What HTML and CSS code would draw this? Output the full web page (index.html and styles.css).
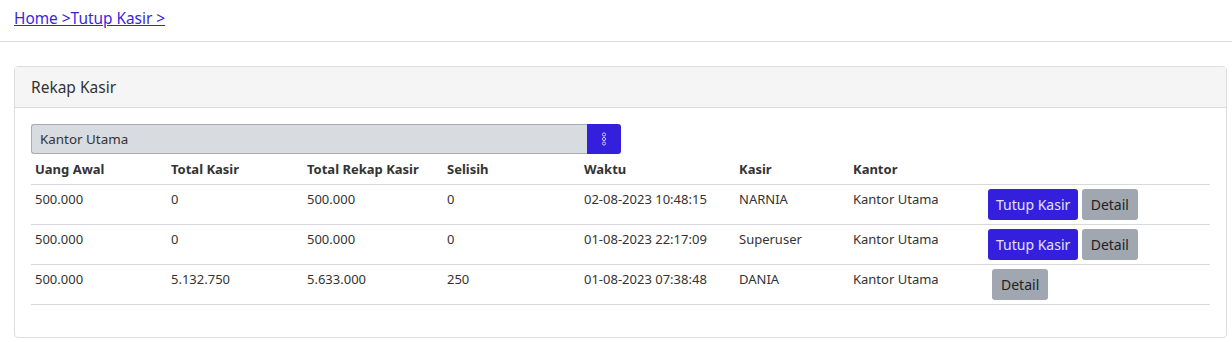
FILE: index.html
```html
<!DOCTYPE html>
<html lang="id">
  <head>
    <meta charset="UTF-8" />
    <title>Tutup Kasir</title>
    <link rel="stylesheet" href="styles.css">
  </head>
  <body>
    <nav class="breadcrumb">
      <a href="#">Home &gt;Tutup Kasir &gt;</a>
    </nav>
    <div class="page">
      <section class="card">
        <div class="card-header">Rekap Kasir</div>
        <div class="card-body">
          <div class="select-group">
            <div class="select">Kantor Utama</div>
            <button class="select-button">
              <svg width="8" height="16" viewBox="0 0 8 16">
                <circle cx="4" cy="3.5" r="1.6" fill="none" stroke="#c9c4ff" stroke-width="1"/>
                <circle cx="4" cy="8" r="1.6" fill="none" stroke="#c9c4ff" stroke-width="1"/>
                <circle cx="4" cy="12.5" r="1.6" fill="none" stroke="#c9c4ff" stroke-width="1"/>
              </svg>
            </button>
          </div>
          <table class="rekap-table">
            <thead>
              <tr>
                <th class="col-awal">Uang Awal</th>
                <th class="col-total">Total Kasir</th>
                <th class="col-rekap">Total Rekap Kasir</th>
                <th class="col-selisih">Selisih</th>
                <th class="col-waktu">Waktu</th>
                <th class="col-kasir">Kasir</th>
                <th class="col-kantor">Kantor</th>
                <th></th>
              </tr>
            </thead>
            <tbody>
              <tr>
                <td>500.000</td>
                <td>0</td>
                <td>500.000</td>
                <td>0</td>
                <td>02-08-2023 10:48:15</td>
                <td>NARNIA</td>
                <td>Kantor Utama</td>
                <td class="actions">
                  <button class="btn btn-primary">Tutup Kasir</button>
                  <button class="btn btn-secondary">Detail</button>
                </td>
              </tr>
              <tr>
                <td>500.000</td>
                <td>0</td>
                <td>500.000</td>
                <td>0</td>
                <td>01-08-2023 22:17:09</td>
                <td>Superuser</td>
                <td>Kantor Utama</td>
                <td class="actions">
                  <button class="btn btn-primary">Tutup Kasir</button>
                  <button class="btn btn-secondary">Detail</button>
                </td>
              </tr>
              <tr>
                <td>500.000</td>
                <td>5.132.750</td>
                <td>5.633.000</td>
                <td>250</td>
                <td>01-08-2023 07:38:48</td>
                <td>DANIA</td>
                <td>Kantor Utama</td>
                <td class="actions">
                  <button class="btn btn-secondary single">Detail</button>
                </td>
              </tr>
            </tbody>
          </table>
        </div>
      </section>
    </div>
  </body>
</html>
```

FILE: styles.css
```css
* {
  margin: 0;
  padding: 0;
  box-sizing: border-box;
}
body {
  font-family: "Noto Sans", "Open Sans", sans-serif;
  font-size: 13px;
  color: #333;
  background: white;
}
.breadcrumb {
  padding: 8px 14px 0;
  height: 42px;
  border-bottom: 1px solid #dcdcdc;
  font-size: 15.4px;
}
.breadcrumb a {
  color: #3a1fe0;
  text-decoration: underline;
}
.page {
  padding: 24px 5px 0 14px;
}
.card {
  border: 1px solid #ddd;
  border-radius: 4px;
}
.card-header {
  height: 41px;
  padding: 0 16px;
  display: flex;
  align-items: center;
  background-color: #f5f5f5;
  border-bottom: 1px solid #ddd;
  font-size: 15.5px;
  color: #333;
}
.card-body {
  padding: 16px 16px 32px;
}
.select-group {
  display: flex;
  width: 590px;
  height: 30px;
}
.select {
  flex: 1;
  display: flex;
  align-items: center;
  padding: 0 8px;
  background-color: #d8dbe0;
  border: 1px solid #a9adb3;
  border-right: none;
  border-radius: 3px 0 0 3px;
  font-size: 13.4px;
  color: #333;
}
.select-button {
  width: 34px;
  border: none;
  border-radius: 0 3px 3px 0;
  background-color: #3420dc;
  display: flex;
  align-items: center;
  justify-content: center;
}
.rekap-table {
  width: 100%;
  border-collapse: collapse;
}
.rekap-table th {
  text-align: left;
  font-weight: bold;
  line-height: 20px;
  padding: 5px 4px 5px;
  border-bottom: 1px solid #d8d8de;
  color: #333;
}
.rekap-table td {
  vertical-align: top;
  padding: 4px;
  height: 40px;
  line-height: 20px;
  border-bottom: 1px solid #d8d8de;
}
.col-awal { width: 136px; }
.col-total { width: 136px; }
.col-rekap { width: 140px; }
.col-selisih { width: 137px; }
.col-waktu { width: 155px; }
.col-kasir { width: 114px; }
.col-kantor { width: 135px; }
.actions {
  white-space: nowrap;
}
.btn {
  font-family: inherit;
  font-size: 14px;
  height: 31px;
  padding: 0 8px;
  border: none;
  border-radius: 3px;
  cursor: pointer;
}
.btn-primary {
  background-color: #3420dc;
  color: #e4e2ff;
}
.btn-secondary {
  padding: 0 9px;
  background-color: #a1a7b1;
  color: #222;
}
.single {
  margin-left: 4px;
}
```
